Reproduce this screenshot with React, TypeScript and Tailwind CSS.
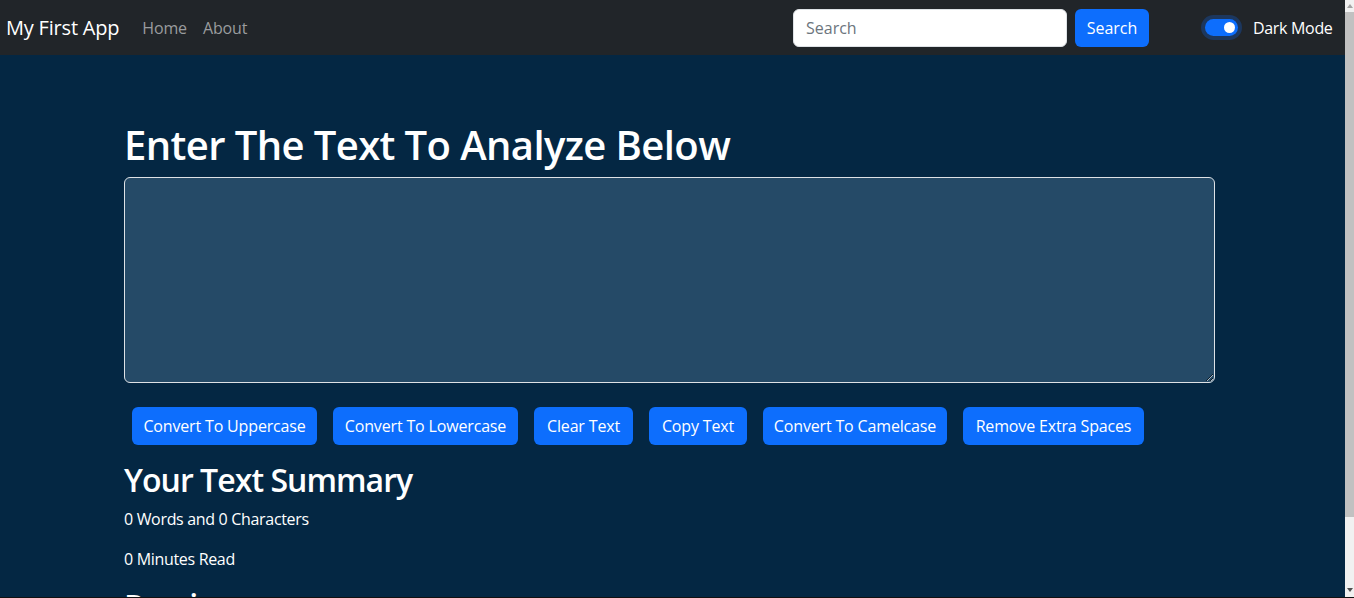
const buttons = [
  { label: "Convert To Uppercase", w: "w-[185px]" },
  { label: "Convert To Lowercase", w: "w-[185px]" },
  { label: "Clear Text", w: "w-[99px]" },
  { label: "Copy Text", w: "w-[98px]" },
  { label: "Convert To Camelcase", w: "w-[184px]" },
  { label: "Remove Extra Spaces", w: "w-[181px]" },
];

const Navbar = () => (
  <nav className="h-[55px] bg-[#212529] flex items-center pl-[6px] pr-[13px]">
    <a className="text-[20px] leading-[30px] text-white tracking-[-0.01em]">My First App</a>
    <div className="flex ml-[15px] text-[16px] leading-[24px] text-[#9a9c9e] tracking-[-0.01em]">
      <a className="px-2">Home</a>
      <a className="px-2">About</a>
    </div>
    <form className="ml-auto flex gap-2">
      <input
        placeholder="Search"
        className="w-[274px] h-[38px] rounded-md bg-white border border-[#dee2e6] px-3 text-[16px] text-[#212529] placeholder:text-[#6c757d] outline-none"
      />
      <button
        type="button"
        className="w-[74px] h-[38px] rounded-md bg-[#0d6efd] text-white text-[16px]"
      >
        Search
      </button>
    </form>
    <div className="flex items-center ml-[56px]">
      <span className="relative w-[33px] h-[17px] rounded-full bg-[#0d6efd] ring-4 ring-[#1c375e]">
        <span className="absolute right-[3px] top-[3px] w-[11px] h-[11px] rounded-full bg-white" />
      </span>
      <span className="ml-[15px] w-[79px] whitespace-nowrap text-white text-[16px] leading-[24px] tracking-[-0.02em]">
        Dark Mode
      </span>
    </div>
  </nav>
);

const Scrollbar = () => (
  <div className="w-[9px] shrink-0 flex flex-col bg-[#f1f1f1]">
    <div className="h-[12px] flex items-center justify-center">
      <span className="w-0 h-0 border-x-[3px] border-x-transparent border-b-[4px] border-b-[#a3a3a3]" />
    </div>
    <div className="h-[505px] bg-[#c1c1c1]" />
    <div className="flex-1" />
    <div className="h-[14px] flex items-center justify-center">
      <span className="w-0 h-0 border-x-[3px] border-x-transparent border-t-[4px] border-t-[#505050]" />
    </div>
  </div>
);

export default function App() {
  return (
    <div
      className="h-screen overflow-hidden flex bg-[#042743] text-white border-b border-[#111]"
      style={{ fontFamily: '"Open Sans", "Noto Sans", sans-serif' }}
    >
      <div className="flex-1 overflow-hidden">
        <Navbar />
        <div className="h-[50px]" />
        <main className="w-[1091px] ml-[124px] pt-4 pb-10">
          <h1 className="text-[40px] leading-[48px] font-semibold tracking-[-0.015em] mb-2">
            Enter The Text To Analyze Below
          </h1>
          <textarea
            rows={8}
            className="block w-full h-[206px] bg-[#254a67] border border-[#dee2e6] rounded-md px-3 py-1.5 text-white outline-none"
          />
          <div className="flex gap-4 pl-2 pt-6 pb-2">
            {buttons.map((b) => (
              <button
                key={b.label}
                type="button"
                className={`${b.w} h-[38px] rounded-md bg-[#0d6efd] text-white text-[16px] leading-[24px] tracking-[-0.01em] whitespace-nowrap`}
              >
                {b.label}
              </button>
            ))}
          </div>
          <section className="pt-2">
            <h2 className="text-[32px] leading-[38.4px] font-semibold tracking-[-0.03em] mb-2">Your Text Summary</h2>
            <p className="text-[16px] leading-[24px] tracking-[-0.02em] mb-4">0 Words and 0 Characters</p>
            <p className="text-[16px] leading-[24px] tracking-[-0.02em] mb-4">0 Minutes Read</p>
            <h2 className="text-[32px] leading-[38.4px] font-semibold tracking-[-0.03em] mb-2">Preview</h2>
            <p className="text-[16px] leading-[24px] tracking-[-0.02em] mb-4">Nothing to preview!</p>
          </section>
        </main>
      </div>
      <Scrollbar />
    </div>
  );
}
